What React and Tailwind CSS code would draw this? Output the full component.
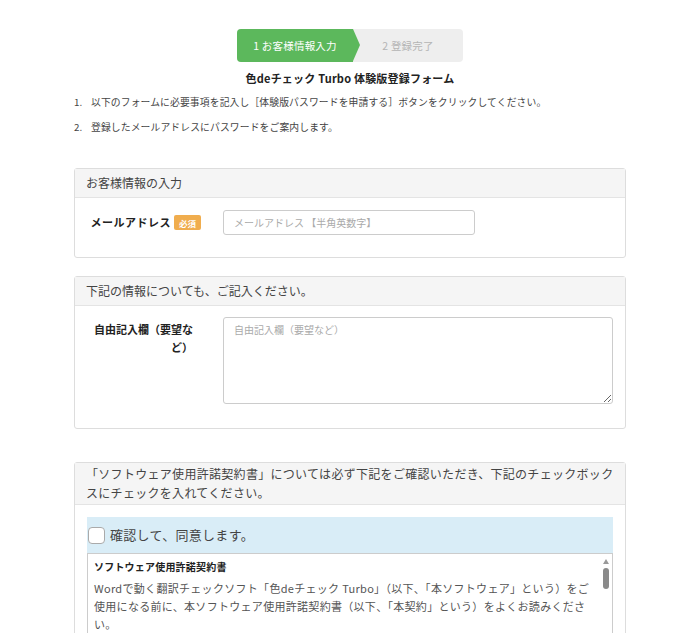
export default function App() {
  const steps = { current: "1 お客様情報入力", next: "2 登録完了" }

  return (
    <div className="h-[633px] overflow-hidden bg-white font-['Noto_Sans_CJK_JP','Noto_Sans',sans-serif] text-[#333]">
      <div className="mx-auto w-[552px] pt-[29px]">
        {/* step bar */}
        <div className="flex justify-center">
          <div className="flex h-[33px] w-[226px] rounded-[4px] bg-[#eeeeee]">
            <div className="relative flex w-[116px] items-center justify-center rounded-l-[4px] bg-[#5cb85c] text-[10.5px] tracking-[0.2px] text-white">
              {steps.current}
              <div className="absolute right-[-7px] top-0 h-0 w-0 border-y-[16.5px] border-l-[7px] border-y-transparent border-l-[#5cb85c]" />
            </div>
            <div className="flex flex-1 items-center justify-center text-[10.5px] tracking-[0.2px] text-[#b5b5b5]">
              {steps.next}
            </div>
          </div>
        </div>

        <h1 className="mt-[8px] text-center text-[11px] font-bold leading-[16px] tracking-[0.2px] text-[#222]">
          色deチェック Turbo 体験版登録フォーム
        </h1>

        <ol className="mt-[4px] text-[9.8px] leading-[25px] tracking-[0.12px] text-[#444]">
          <li className="flex">
            <span className="w-[17px]">1.</span>
            <span>以下のフォームに必要事項を記入し［体験版パスワードを申請する］ボタンをクリックしてください。</span>
          </li>
          <li className="flex">
            <span className="w-[17px]">2.</span>
            <span>登録したメールアドレスにパスワードをご案内します。</span>
          </li>
        </ol>

        {/* panel 1 */}
        <div className="mt-[28px] rounded-[3px] border border-[#dddddd]">
          <div className="flex h-[29px] items-center border-b border-[#e4e4e4] bg-[#f5f5f5] px-[11px] text-[12px] text-[#444]">
            お客様情報の入力
          </div>
          <div className="flex items-center pb-[22px] pl-[11px] pt-[12px]">
            <div className="flex w-[115px] items-center justify-end gap-[3px] whitespace-nowrap text-[11px] font-bold tracking-[0.5px] text-[#222]">
              メールアドレス
              <span className="rounded-[2px] bg-[#f0ad4e] px-[5px] py-[1.5px] text-[8.5px] font-bold leading-[12px] tracking-normal text-white">必須</span>
            </div>
            <input
              type="text"
              placeholder="メールアドレス 【半角英数字】"
              className="ml-[22px] h-[25px] w-[252px] rounded-[3px] border border-[#cccccc] px-[10px] text-[10px] placeholder:text-[#aaaaaa] outline-none"
            />
          </div>
        </div>

        {/* panel 2 */}
        <div className="mt-[18px] rounded-[3px] border border-[#dddddd]">
          <div className="flex h-[29px] items-center border-b border-[#e4e4e4] bg-[#f5f5f5] px-[11px] text-[12px] text-[#444]">
            下記の情報についても、ご記入ください。
          </div>
          <div className="flex items-start pb-[24px] pl-[11px] pr-[12px] pt-[11px]">
            <div className="w-[107px] pt-[3px] text-right text-[11px] font-bold leading-[18px] text-[#222]">
              自由記入欄（要望など）
            </div>
            <textarea
              placeholder="自由記入欄（要望など）"
              className="ml-[30px] h-[87px] flex-1 resize-y rounded-[3px] border border-[#cccccc] px-[10px] py-[4px] text-[10px] placeholder:text-[#aaaaaa] outline-none"
            />
          </div>
        </div>

        {/* panel 3 */}
        <div className="mt-[33px] rounded-[3px] border border-[#dddddd]">
          <div className="border-b border-[#e4e4e4] bg-[#f5f5f5] px-[11px] pb-[2px] pt-[2px] text-[12px] leading-[18.5px] tracking-[0.3px] text-[#444]">
            「ソフトウェア使用許諾契約書」については必ず下記をご確認いただき、下記のチェックボック
            <br />
            スにチェックを入れてください。
          </div>
          <div className="px-[12px] pt-[12px]">
            <label className="flex h-[36px] items-center gap-[5px] bg-[#d9edf7] pl-[1px] text-[13px] tracking-[0.3px] text-[#444]">
              <span className="h-[17px] w-[17px] rounded-[4px] border border-[#aaaaaa] bg-white" />
              確認して、同意します。
            </label>
            <div className="flex h-[200px] border border-[#cccccc]">
              <div className="flex-1 overflow-hidden px-[6px] pt-[4px]">
                <p className="text-[10px] font-bold leading-[18px] tracking-[0.2px] text-[#222]">ソフトウェア使用許諾契約書</p>
                <p className="mt-[3px] text-[11px] leading-[18px] tracking-[0.3px] text-[#555]">
                  Wordで動く翻訳チェックソフト「色deチェック Turbo」（以下、「本ソフトウェア」という）をご使用になる前に、本ソフトウェア使用許諾契約書（以下、「本契約」という）をよくお読みください。
                </p>
              </div>
              <div className="flex w-[13px] flex-col items-center pt-[5px]">
                <div className="h-0 w-0 border-x-[3.5px] border-b-[5px] border-x-transparent border-b-[#9a9a9a]" />
                <div className="mt-[4px] h-[21px] w-[6px] rounded-full bg-[#8a8a8a]" />
              </div>
            </div>
          </div>
        </div>
      </div>
    </div>
  )
}
